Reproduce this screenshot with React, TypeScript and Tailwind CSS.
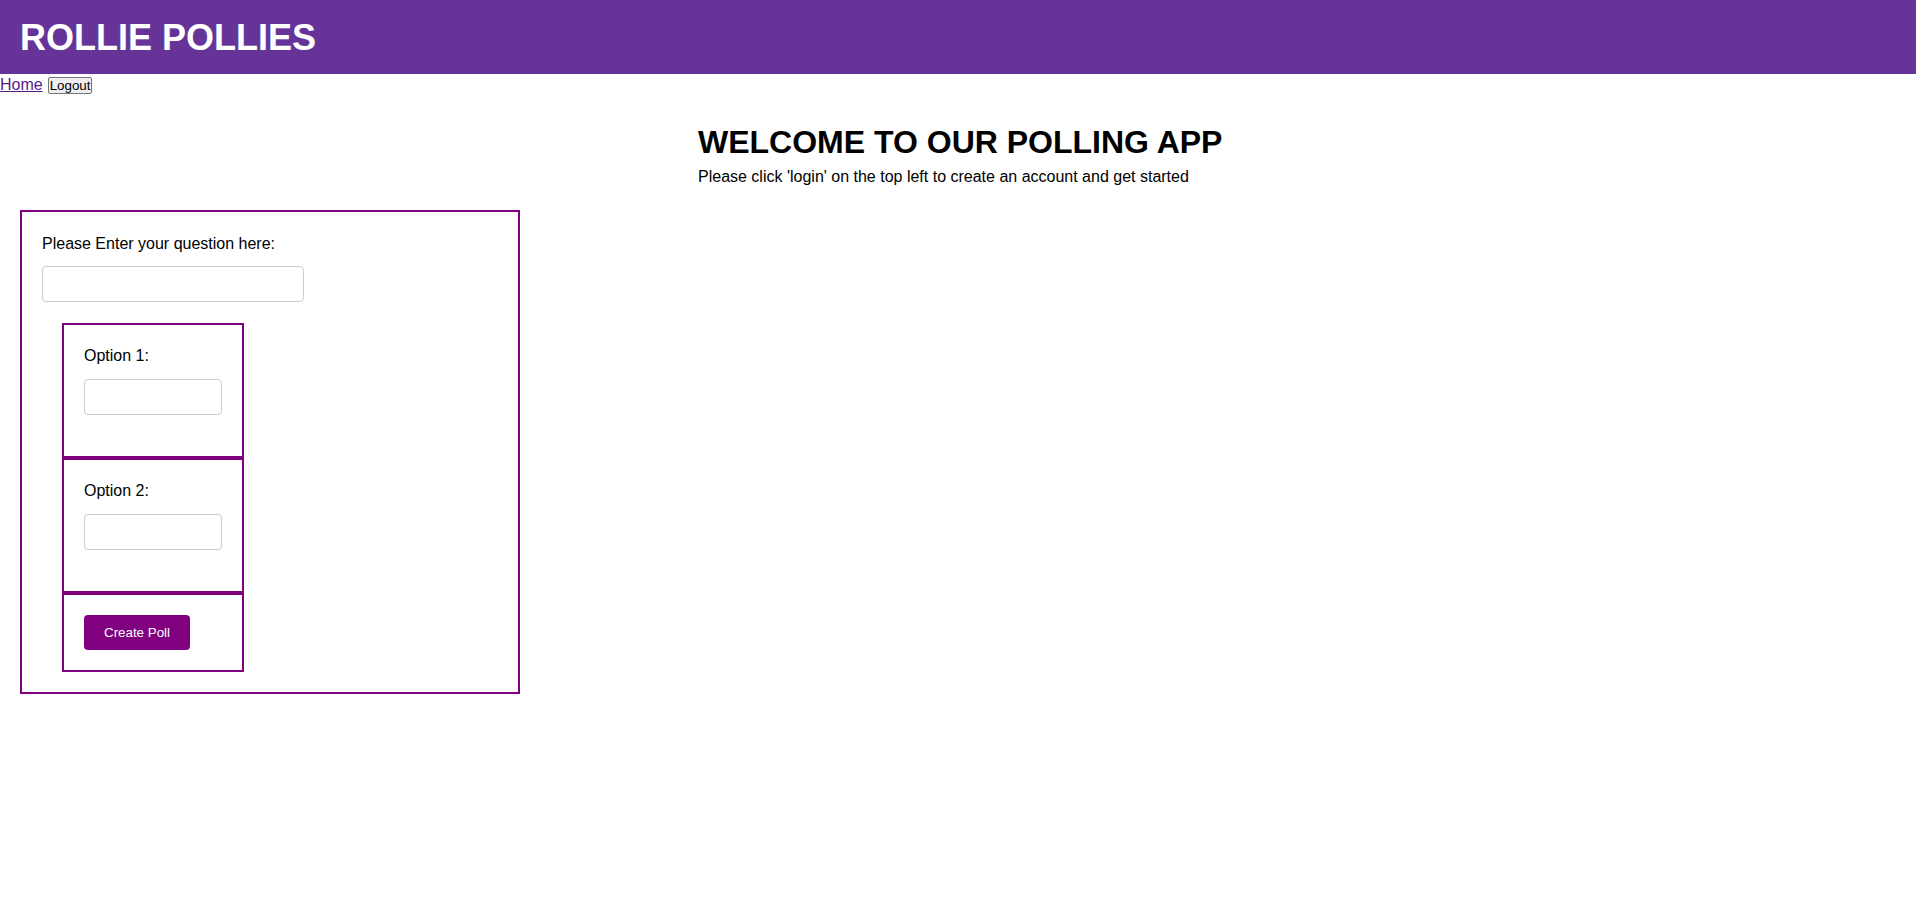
import React from "react";

const font = { fontFamily: '"Liberation Sans", Arial, sans-serif' };

function OptionBox({ n }: { n: number }) {
  return (
    <div className="ml-[20px] w-[182px] border-2 border-[#800080] pt-[22px] px-[20px] pb-[41px]">
      <div className="text-[16px] leading-[18px] text-black">Option {n}:</div>
      <input
        type="text"
        className="mt-[14px] block h-[36px] w-[138px] rounded-[4px] border border-[#cccccc] bg-white outline-none"
      />
    </div>
  );
}

export default function App() {
  return (
    <div className="min-h-[897px] bg-white text-black" style={font}>
      <header className="flex h-[74px] items-center bg-[#663399] pl-[20px]">
        <h1 className="text-[36px] font-bold leading-[41px] text-white">ROLLIE POLLIES</h1>
      </header>
      <nav className="flex h-[22px] items-start pt-[2px]">
        <a href="#" className="text-[16px] leading-[18px] text-[#551a8b] underline">
          Home
        </a>
        <button className="ml-[5px] mt-[1px] h-[17px] rounded-[2px] border border-[#767676] bg-[#efefef] px-[1px] text-[13.33px] leading-[15px] text-black">
          Logout
        </button>
      </nav>
      <section className="mx-auto w-[520px] whitespace-nowrap">
        <h1 className="mt-[28px] text-[32px] font-bold leading-[37px] text-black">
          WELCOME TO OUR POLLING APP
        </h1>
        <p className="mt-[7px] text-[16px] leading-[18px]">
          Please click 'login' on the top left to create an account and get started
        </p>
      </section>
      <form
        className="ml-[20px] mt-[24px] w-[500px] border-2 border-[#800080] px-[20px] pt-[23px] pb-[20px]"
        onSubmit={(e) => e.preventDefault()}
      >
        <div className="text-[16px] leading-[18px]">Please Enter your question here:</div>
        <input
          type="text"
          className="mt-[13px] block h-[36px] w-[262px] rounded-[4px] border border-[#cccccc] bg-white outline-none"
        />
        <div className="mt-[21px]">
          <OptionBox n={1} />
          <OptionBox n={2} />
          <div className="ml-[20px] w-[182px] border-2 border-[#800080] p-[20px]">
            <button
              type="submit"
              className="h-[35px] w-[106px] rounded-[4px] bg-[#800080] text-[13.33px] font-medium text-white"
            >
              Create Poll
            </button>
          </div>
        </div>
      </form>
    </div>
  );
}
